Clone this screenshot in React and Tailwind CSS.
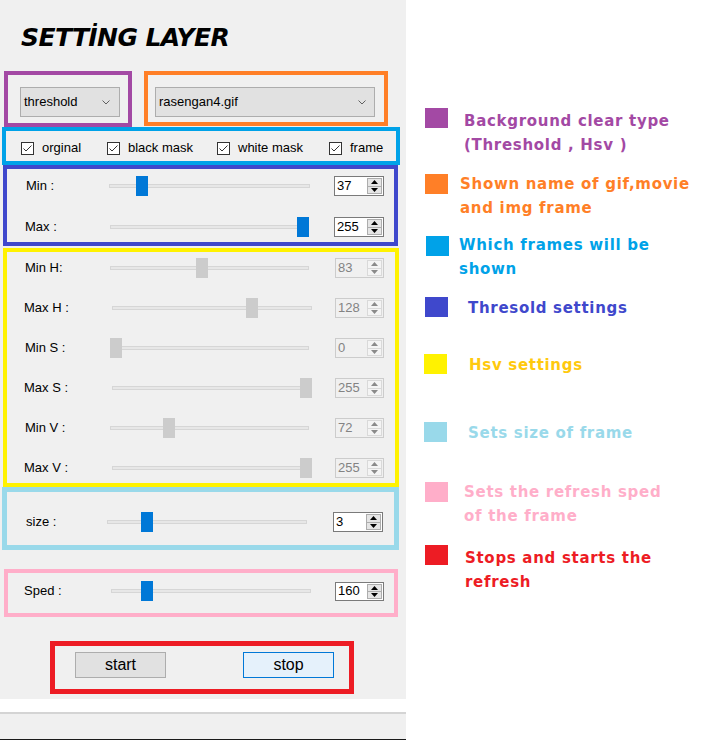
import React from "react";

const FONT = "font-['Liberation_Sans',Arial,sans-serif]";

function Chevron() {
  return (
    <svg width="8" height="5" viewBox="0 0 8 5" className="shrink-0">
      <path d="M0.5 0.5 L4 4 L7.5 0.5" fill="none" stroke="#606060" strokeWidth="1" />
    </svg>
  );
}

function Combo({ text, cls }) {
  return (
    <div className={`${cls} h-[30px] flex items-center justify-between bg-[#e1e1e1] border border-[#adadad] text-[13px] text-black`}>
      <span>{text}</span>
      <Chevron />
    </div>
  );
}

function Check({ label, cls }) {
  return (
    <div className={`${cls} flex items-center shrink-0`}>
      <div className="w-[13px] h-[13px] border border-[#333333] bg-white flex items-center justify-center">
        <svg width="11" height="11" viewBox="0 0 11 11">
          <path d="M1.5 5.5 L4 8 L9.5 2.5" fill="none" stroke="#333333" strokeWidth="1" />
        </svg>
      </div>
      <span className="ml-[8px] text-[13px] text-black leading-[16px]">{label}</span>
    </div>
  );
}

function Tri({ up, color }) {
  return (
    <svg width="7" height="4" viewBox="0 0 7 4">
      {up ? <path d="M0 4 L3.5 0 L7 4 Z" fill={color} /> : <path d="M0 0 L3.5 4 L7 0 Z" fill={color} />}
    </svg>
  );
}

function Spin({ value, disabled, cls }) {
  const col = disabled ? "#8a8a8a" : "#000000";
  return (
    <div
      className={`${cls} shrink-0 flex border text-[13px] ${
        disabled ? "border-[#cccccc] bg-[#f0f0f0] text-[#838383]" : "border-[#7a7a7a] bg-white text-black"
      }`}
    >
      <div className="flex-1 pl-[2px] flex items-center">{value}</div>
      <div
        className={`w-[15px] my-[1px] mr-[1px] flex flex-col border ${
          disabled ? "border-[#d9d9d9]" : "border-[#adadad]"
        }`}
      >
        <div className={`flex-1 flex items-center justify-center border-b ${disabled ? "border-[#d9d9d9] bg-[#f4f4f4]" : "border-[#adadad] bg-[#e5e5e5]"}`}>
          <Tri up color={col} />
        </div>
        <div className={`flex-1 flex items-center justify-center ${disabled ? "bg-[#f4f4f4]" : "bg-[#e5e5e5]"}`}>
          <Tri color={col} />
        </div>
      </div>
    </div>
  );
}

function Slider({ cls, value, min = 0, max, disabled }) {
  const p = (value - min) / (max - min);
  return (
    <div className={`${cls} shrink-0 relative h-[20px] flex items-center`}>
      <div className="w-full h-[4px] bg-[#e7e7e7] border border-[#d6d6d6]" />
      <div
        className={`absolute top-0 w-[12px] h-[20px] ${disabled ? "bg-[#cccccc]" : "bg-[#0078d7]"}`}
        style={{ left: `calc(${p} * (100% - 12px))` }}
      />
    </div>
  );
}

function Row({ label, labelCls, trackCls, spinCls, value, min, max, disabled, spinH = "h-[20px]" }) {
  return (
    <div className="flex items-center h-[20px]">
      <div className={`${labelCls} shrink-0 text-[13px] leading-[20px] text-black`}>{label}</div>
      <Slider cls={trackCls} value={value} min={min} max={max} disabled={disabled} />
      <Spin cls={`${spinCls} ${spinH}`} value={value} disabled={disabled} />
    </div>
  );
}

function LegendItem({ color, sq, itemCls, sqCls, textCls, lines }) {
  return (
    <div className={`${itemCls} flex items-start`}>
      <div className={`${sqCls} w-[23px] h-[20px] shrink-0`} style={{ backgroundColor: sq }} />
      <div
        className={`${textCls} font-['DejaVu_Sans',Verdana,sans-serif] text-[15px] font-bold leading-[24px] tracking-[0.7px]`}
        style={{ color }}
      >
        {lines.map((l, i) => (
          <div key={i} className="whitespace-nowrap">{l}</div>
        ))}
      </div>
    </div>
  );
}

export default function App() {
  return (
    <div className={`${FONT} w-[722px] h-[740px] bg-white flex overflow-hidden`}>
      {/* Left settings panel */}
      <div className="w-[406px] shrink-0 flex flex-col">
        <div className="h-[699px] bg-[#f0f0f0] flex flex-col">
          <div className="pl-[21px] pt-[23px] font-['DejaVu_Sans',Verdana,sans-serif] text-[25px] leading-[30px] font-bold italic tracking-[-0.6px] text-black">
            SETTİNG LAYER
          </div>

          <div className="mt-[18px] flex">
            <div className="ml-[4px] w-[128px] h-[56px] border-4 border-[#a349a4] pt-[12px] pl-[12px]">
              <Combo text="threshold" cls="w-[100px] pl-[3px] pr-[9px]" />
            </div>
            <div className="ml-[12px] w-[244px] h-[55px] border-4 border-[#ff7f27] pt-[12px] pl-[7px]">
              <Combo text="rasengan4.gif" cls="w-[220px] pl-[3px] pr-[8px]" />
            </div>
          </div>

          <div className="ml-[2px] w-[398px] h-[38px] border-4 border-[#00a2e8] flex items-center pt-[4px]">
            <Check label="orginal" cls="ml-[15px] w-[86px]" />
            <Check label="black mask" cls="w-[110px]" />
            <Check label="white mask" cls="w-[112px]" />
            <Check label="frame" cls="" />
          </div>

          <div className="ml-[3px] w-[395px] h-[81px] border-4 border-[#3f48cc] flex flex-col pt-[7px] gap-[21px]">
            <Row label="Min :" labelCls="ml-[19px] w-[83px]" trackCls="w-[201px]" spinCls="ml-[24px] w-[50px]" value={37} max={255} />
            <Row label="Max :" labelCls="ml-[18px] w-[85px]" trackCls="w-[199px]" spinCls="ml-[25px] w-[50px]" value={255} max={255} />
          </div>

          <div className="mt-[2px] ml-[3px] w-[396px] h-[239px] border-4 border-[#fff200] flex flex-col pt-[6px] gap-[20px]">
            <Row label="Min H:" labelCls="ml-[18px] w-[85px]" trackCls="w-[199px]" spinCls="ml-[26px] w-[49px]" value={83} max={180} disabled />
            <Row label="Max H :" labelCls="ml-[17px] w-[88px]" trackCls="w-[200px]" spinCls="ml-[23px] w-[49px]" value={128} max={180} disabled />
            <Row label="Min S :" labelCls="ml-[18px] w-[85px]" trackCls="w-[199px]" spinCls="ml-[26px] w-[49px]" value={0} max={255} disabled />
            <Row label="Max S :" labelCls="ml-[17px] w-[88px]" trackCls="w-[200px]" spinCls="ml-[23px] w-[49px]" value={255} max={255} disabled />
            <Row label="Min V :" labelCls="ml-[18px] w-[85px]" trackCls="w-[199px]" spinCls="ml-[26px] w-[49px]" value={72} max={255} disabled />
            <Row label="Max V :" labelCls="ml-[17px] w-[88px]" trackCls="w-[200px]" spinCls="ml-[23px] w-[49px]" value={255} max={255} disabled />
          </div>

          <div className="ml-[2px] w-[397px] h-[63px] border-[5px] border-[#99d9ea] pt-[20px]">
            <Row label="size :" labelCls="ml-[19px] w-[81px]" trackCls="w-[200px]" spinCls="ml-[26px] w-[50px]" value={3} min={1} max={12} />
          </div>

          <div className="mt-[19px] ml-[4px] w-[394px] h-[48px] border-4 border-[#ffaec9] pt-[8px]">
            <Row label="Sped :" labelCls="ml-[16px] w-[87px]" trackCls="w-[200px]" spinCls="ml-[24px] w-[49px]" value={160} max={1000} spinH="h-[19px]" />
          </div>

          <div className="mt-[24px] ml-[50px] w-[304px] h-[53px] border-[5px] border-[#ed1c24] pt-[6px] flex">
            <div className="ml-[20px] w-[91px] h-[26px] bg-[#e1e1e1] border border-[#adadad] flex items-center justify-center text-[16px] text-black">start</div>
            <div className="ml-[77px] w-[91px] h-[26px] bg-[#e5f1fb] border border-[#0078d7] flex items-center justify-center text-[16px] text-black">stop</div>
          </div>
        </div>
        <div className="h-[13px] bg-white" />
        <div className="h-[2px] bg-[#d4d4d4]" />
        <div className="h-[25px] bg-[#f0f0f0]" />
        <div className="h-[1px] bg-[#1a1a1a]" />
      </div>

      {/* Legend */}
      <div className="flex-1 flex flex-col">
        <LegendItem itemCls="mt-[108px]" sq="#a349a4" color="#a349a4" sqCls="ml-[19px]" textCls="mt-[1px] ml-[16px]" lines={["Background clear type", "(Threshold , Hsv )"]} />
        <LegendItem itemCls="mt-[15px]" sq="#ff7f27" color="#ff7f27" sqCls="ml-[19px] mt-[2px]" textCls="ml-[12px]" lines={["Shown name of gif,movie", "and img frame"]} />
        <LegendItem itemCls="mt-[13px]" sq="#00a2e8" color="#00a2e8" sqCls="ml-[20px] mt-[3px]" textCls="ml-[10px]" lines={["Which frames will be", "shown"]} />
        <LegendItem itemCls="mt-[15px]" sq="#3f48cc" color="#3f48cc" sqCls="ml-[19px] mt-[1px]" textCls="ml-[20px]" lines={["Thresold settings"]} />
        <LegendItem itemCls="mt-[33px]" sq="#fff200" color="#ffc90e" sqCls="ml-[18px] mt-[1px]" textCls="ml-[22px]" lines={["Hsv settings"]} />
        <LegendItem itemCls="mt-[44px]" sq="#99d9ea" color="#99d9ea" sqCls="ml-[18px] mt-[1px]" textCls="ml-[21px]" lines={["Sets size of frame"]} />
        <LegendItem itemCls="mt-[35px]" sq="#ffaec9" color="#ffaec9" sqCls="ml-[19px] mt-[2px]" textCls="ml-[16px]" lines={["Sets the refresh sped", "of the frame"]} />
        <LegendItem itemCls="mt-[17px]" sq="#ed1c24" color="#ed1c24" sqCls="ml-[19px]" textCls="mt-[1px] ml-[17px]" lines={["Stops and starts the", "refresh"]} />
      </div>
    </div>
  );
}
